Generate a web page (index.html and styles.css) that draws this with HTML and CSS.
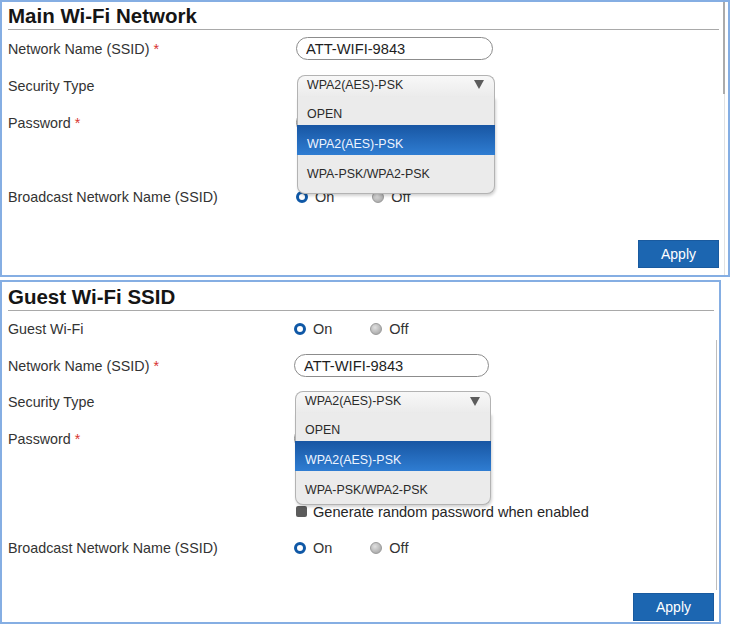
FILE: index.html
```html
<!DOCTYPE html>
<html lang="en">
<head>
<meta charset="utf-8">
<title>Wi-Fi Settings</title>
<link rel="stylesheet" href="styles.css">
</head>
<body>
<section class="panel panel-main">
  <h2 class="panel-title">Main Wi-Fi Network</h2>
  <div class="rows">
    <div class="row">
      <span class="label">Network Name (SSID) <span class="req">*</span></span>
      <div class="control"><input class="text-input" type="text" value="ATT-WIFI-9843"></div>
    </div>
    <div class="row">
      <span class="label">Security Type</span>
      <div class="control">
        <div class="select">
          <div class="select-head"><span>WPA2(AES)-PSK</span><span class="arrow"></span></div>
          <div class="menu">
            <div class="option">OPEN</div>
            <div class="option option-selected">WPA2(AES)-PSK</div>
            <div class="option">WPA-PSK/WPA2-PSK</div>
          </div>
        </div>
      </div>
    </div>
    <div class="row">
      <span class="label">Password <span class="req">*</span></span>
      <div class="control"><input class="text-input" type="password"></div>
    </div>
    <div class="row"></div>
    <div class="row">
      <span class="label">Broadcast Network Name (SSID)</span>
      <div class="control radios">
        <span class="radio-opt"><span class="radio radio-on"></span>On</span>
        <span class="radio-opt"><span class="radio radio-off"></span>Off</span>
      </div>
    </div>
  </div>
  <div class="actions"><button class="btn-apply">Apply</button></div>
  <div class="scroll-track"></div>
  <div class="scroll-thumb"></div>
</section>

<section class="panel panel-guest">
  <h2 class="panel-title">Guest Wi-Fi SSID</h2>
  <div class="rows">
    <div class="row">
      <span class="label">Guest Wi-Fi</span>
      <div class="control radios">
        <span class="radio-opt"><span class="radio radio-on"></span>On</span>
        <span class="radio-opt"><span class="radio radio-off"></span>Off</span>
      </div>
    </div>
    <div class="row">
      <span class="label">Network Name (SSID) <span class="req">*</span></span>
      <div class="control"><input class="text-input" type="text" value="ATT-WIFI-9843"></div>
    </div>
    <div class="row">
      <span class="label">Security Type</span>
      <div class="control">
        <div class="select">
          <div class="select-head"><span>WPA2(AES)-PSK</span><span class="arrow"></span></div>
          <div class="menu">
            <div class="option">OPEN</div>
            <div class="option option-selected">WPA2(AES)-PSK</div>
            <div class="option">WPA-PSK/WPA2-PSK</div>
          </div>
        </div>
      </div>
    </div>
    <div class="row">
      <span class="label">Password <span class="req">*</span></span>
      <div class="control"><input class="text-input" type="password"></div>
    </div>
    <div class="row"></div>
    <div class="row">
      <span class="label"></span>
      <div class="control check-line"><span class="check"></span>Generate random password when enabled</div>
    </div>
    <div class="row">
      <span class="label">Broadcast Network Name (SSID)</span>
      <div class="control radios">
        <span class="radio-opt"><span class="radio radio-on"></span>On</span>
        <span class="radio-opt"><span class="radio radio-off"></span>Off</span>
      </div>
    </div>
  </div>
  <div class="actions"><button class="btn-apply">Apply</button></div>
  <div class="scroll-line"></div>
</section>
</body>
</html>
```

FILE: styles.css
```css
body {
  margin: 0;
  font-family: "Liberation Sans", Arial, sans-serif;
  color: #333;
  background: #fff;
}

.panel {
  position: relative;
  box-sizing: border-box;
  border: 2px solid #85aee3;
  padding: 0 9px 0 6px;
}

.panel-main {
  width: 730px;
  height: 277px;
}

.panel-guest {
  width: 721px;
  height: 344px;
  margin-top: 3px;
  padding-right: 5px;
}

.panel-title {
  margin: 0;
  height: 27px;
  line-height: 27px;
  font-size: 20.5px;
  font-weight: bold;
  color: #151515;
  border-bottom: 1px solid #a9a9a9;
}

.panel-guest .panel-title {
  height: 28px;
  line-height: 29px;
}

.rows {
  display: flex;
  flex-direction: column;
}

.row {
  display: grid;
  grid-template-columns: 288px 1fr;
  align-items: center;
  height: 37px;
}

.panel-guest .row {
  grid-template-columns: 286px 1fr;
  height: 36.5px;
}

.label {
  font-size: 14.3px;
  color: #333;
}

.req {
  color: #d8332f;
}

.control {
  display: flex;
  align-items: center;
}

.text-input {
  width: 197px;
  height: 23px;
  box-sizing: border-box;
  margin: 0;
  border: 1.5px solid #8c8c8c;
  border-radius: 12px;
  padding: 0 0 0 9px;
  font: 14.7px "Liberation Sans", Arial, sans-serif;
  color: #1e1e1e;
  background: #fff;
  outline: none;
}

.panel-guest .text-input {
  width: 195px;
}

.select {
  position: relative;
  z-index: 2;
  width: 198px;
  margin-left: 1px;
}

.panel-guest .select {
  width: 196px;
}

.select-head {
  display: flex;
  justify-content: space-between;
  align-items: center;
  height: 22px;
  box-sizing: border-box;
  padding: 0 10px 3px 9px;
  border: 1px solid #b3b3b3;
  border-bottom: none;
  border-radius: 8px 8px 0 0;
  background: linear-gradient(#f8f8f8, #ebebeb);
  font-size: 12.4px;
  color: #2a2a2a;
}

.arrow {
  width: 0;
  height: 0;
  border-left: 5px solid transparent;
  border-right: 5px solid transparent;
  border-top: 9px solid #5c5c5c;
}

.menu {
  position: absolute;
  top: 100%;
  left: 0;
  right: 0;
  padding-bottom: 8px;
  background: #ebebeb;
  border: 1px solid #b3b3b3;
  border-top: none;
  border-radius: 0 0 8px 8px;
  box-shadow: 1px 2px 3px rgba(0, 0, 0, 0.18);
}

.panel-guest .menu {
  padding-bottom: 3px;
}

.option {
  height: 30px;
  box-sizing: border-box;
  padding: 12px 0 0 9px;
  line-height: 14px;
  font-size: 12.4px;
  color: #2a2a2a;
}

.option:first-child {
  height: 28px;
  padding-top: 10px;
}

.option-selected {
  margin: 0 -1px;
  padding-left: 10px;
  background: linear-gradient(#1856a3, #2f7dd2);
  color: #eef4ff;
}

.radios {
  gap: 38px;
}

.radio-opt {
  display: flex;
  align-items: center;
  gap: 7px;
  font-size: 14.5px;
  color: #333;
}

.radio {
  width: 12px;
  height: 12px;
  box-sizing: border-box;
  border-radius: 50%;
}

.radio-on {
  border: 3px solid #0f58a6;
  background: #fff;
}

.radio-off {
  border: 1px solid #9a9a9a;
  background: radial-gradient(circle at 40% 35%, #e0e0e0, #9c9c9c);
}

.check-line {
  gap: 6px;
  font-size: 14.6px;
  color: #262626;
  margin-left: 2px;
}

.check {
  width: 11px;
  height: 11px;
  border-radius: 2px;
  background: #5b5b5b;
}

.actions {
  display: flex;
  justify-content: flex-end;
  margin-top: 25px;
}

.panel-guest .actions {
  margin-top: 26px;
}

.btn-apply {
  width: 81px;
  height: 28px;
  padding: 0;
  border: 1px solid #195a9f;
  background: #1c66b1;
  color: #fff;
  font: 14px "Liberation Sans", Arial, sans-serif;
}

.scroll-track {
  position: absolute;
  top: 0;
  bottom: 0;
  right: 3px;
  width: 1px;
  background: #e2e2e2;
}

.scroll-thumb {
  position: absolute;
  top: 0;
  right: 3px;
  width: 2px;
  height: 92px;
  background: #ababab;
}

.scroll-line {
  position: absolute;
  top: 58px;
  bottom: 32px;
  right: 2px;
  width: 1px;
  background: #bdbdbd;
}
```
